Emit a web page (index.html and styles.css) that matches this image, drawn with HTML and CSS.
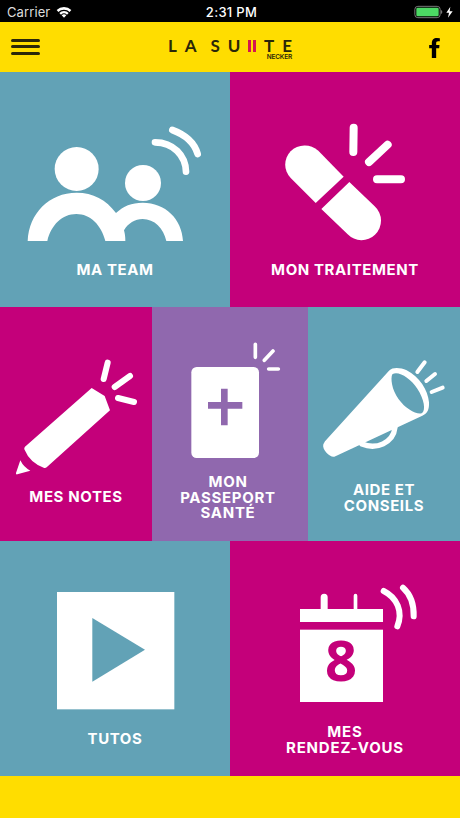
FILE: index.html
```
<!DOCTYPE html>
<html lang="fr">
<head>
    <meta charset="UTF-8">
    <meta name="viewport" content="width=device-width, initial-scale=1.0">
    <title>La Suite Necker</title>
    <link rel="stylesheet" href="styles.css">
</head>
<body>

<!-- Barre de statut -->
<div class="status-bar">
    <div class="status-side">
        <span class="carrier">Carrier</span>
        <svg class="wifi" viewBox="0 0 48 36">
            <path d="M2 12a32 32 0 0 1 44 0l-5 6a24 24 0 0 0-34 0z"/>
            <path d="M10 21a20 20 0 0 1 28 0l-5 5a13 13 0 0 0-18 0z"/>
            <path d="M17 28a10 10 0 0 1 14 0l-7 7z"/>
        </svg>
    </div>
    <span class="time">2:31 PM</span>
    <div class="status-side right">
        <svg class="battery" viewBox="0 0 120 42">
            <rect class="battery-case" x="2.5" y="4" width="76" height="34" rx="9"/>
            <rect class="battery-level" x="7" y="8" width="67" height="26" rx="4"/>
            <path class="battery-tip" d="M81 15q4 2 4 6t-4 6z"/>
            <path class="bolt" d="M109 5L97 23h8l-3 15 14-19h-9z"/>
        </svg>
    </div>
</div>

<!-- En-tête -->
<header class="header">
    <button class="menu" aria-label="Menu">
        <span></span>
        <span></span>
        <span></span>
    </button>
    <div class="logo">
        <div class="logo-name">
            <span>L</span><span>A</span><span class="word">S</span><span>U</span>
            <i class="bars"></i>
            <span>T</span><span>E</span>
        </div>
        <div class="logo-sub">NECKER</div>
    </div>
    <svg class="facebook" viewBox="0 0 32 60">
        <path d="M8 60V31H0V21h8v-5C8 5 14 0 23 0q5 0 9 1v9h-5c-5 0-6 2-6 6v5h10l-1 10h-9v29z"/>
    </svg>
</header>

<!-- Menu principal -->
<main class="tiles">
    <div class="row">
        <a class="tile blue team">
            <svg class="icon" viewBox="0 0 690 456">
                <circle cx="230" cy="177" r="66"/>
                <circle cx="429" cy="219" r="54"/>
                <path d="M83 393C87 310 147 248 230 248c49 0 89 21 118 61 22-21 47-31 80-31 68 0 118 49 121 115h-50c-8-38-36-66-71-66-23 0-44 13-56 34 3 11 4 20 4 32h-60c-12-48-45-81-87-81s-76 33-87 81z"/>
                <path class="line w20" d="M465 97c55 0 92 40 93 88M517 60c38 14 66 37 76 72"/>
            </svg>
            <span class="label">MA TEAM</span>
        </a>
        <a class="tile pink treatment">
            <svg class="icon" viewBox="0 0 690 456">
                <path d="M341 200l-84 79-75-75a57 57 0 0 1 0-80 60 60 0 0 1 83-2z"/>
                <path d="M358 216l76 73a58 58 0 0 1 1 85 58 58 0 0 1-82-1l-79-76z"/>
                <path class="line w24" d="M371 53L370 126M473 104L417 156M441 208H513"/>
            </svg>
            <span class="label">MON TRAITEMENT</span>
        </a>
    </div>

    <div class="row row-three">
        <a class="tile pink notes">
            <svg class="icon" viewBox="0 0 456 445">
                <path d="M275 144l39 24 16 43-190 171q-4 3-9 1-41-14-58-55-1-4 2-8z"/>
                <path d="M61 361q10 21 30 31l-39 11q-5 1-4-4z"/>
                <path class="line w18" d="M323 68L311 117M390 108L344 141M354 174L402 186"/>
            </svg>
            <span class="label">MES NOTES</span>
        </a>
        <a class="tile purple passport">
            <svg class="icon" viewBox="6 0 468 432">
                <rect x="124" y="111" width="203" height="273" rx="16"/>
                <path class="cut" d="M213 176h20v40h44v20h-44v50h-20v-50h-39v-20h39z"/>
                <path class="line w11" d="M316 43V82M343 91L369 63M356 117H385"/>
            </svg>
            <span class="label">MON<br>PASSEPORT<br>SANTÉ</span>
        </a>
        <a class="tile blue advice">
            <svg class="icon" viewBox="9 0 456 426">
                <path d="M60 304L252 92c12-11 34-9 53-1 38 19 64 60 67 96 1 23-5 34-20 40L88 350c-11 4-38-20-33-37z"/>
                <path class="cut" d="M262 103c-6 12-2 46 19 75 21 29 52 46 69 42 14-8 7-44-13-74-21-32-58-55-75-43z"/>
                <path class="line w16" d="M171 312c42 18 94-3 99-50"/>
                <path class="line w12" d="M359 67L337 96M390 102L364 123M413 143L380 156"/>
            </svg>
            <span class="label">AIDE ET<br>CONSEILS</span>
        </a>
    </div>

    <div class="row">
        <a class="tile blue tutos">
            <svg class="icon" viewBox="0 0 690 483">
                <rect x="171" y="66" width="352" height="352"/>
                <path class="cut" d="M277 144l158 95-158 96z"/>
            </svg>
            <span class="label">TUTOS</span>
        </a>
        <a class="tile pink meetings">
            <svg class="icon" viewBox="0 0 690 462">
                <path d="M210 117h62V82a10.500 10.500 0 0 1 21 0v35h78V77a5.500 5.500 0 0 1 11 0v40h77v39H210z"/>
                <rect x="210" y="179" width="249" height="217"/>
                <text class="day" x="333" y="333">8</text>
                <path class="line w18" d="M461 63c40 20 59 62 41 106M519 53c27 24 33 55 32 86"/>
            </svg>
            <span class="label">MES<br>RENDEZ-VOUS</span>
        </a>
    </div>
</main>

</body>
</html>
```

FILE: styles.css
```
* {
    box-sizing: border-box;
}

body {
    margin: 0;
    height: 818px;
    font-family: Inter, sans-serif;
    background-color: #ffdd00;
    overflow: hidden;
}

/* Barre de statut */
.status-bar {
    display: flex;
    align-items: center;
    justify-content: space-between;
    height: 22.4px;
    padding: 2px 6px 0 7px;
    background-color: #000;
    color: #fff;
    font-size: 13px;
    line-height: 20px;
}

.status-side {
    display: flex;
    align-items: center;
    flex: 1;
}

.right {
    justify-content: flex-end;
}

.carrier {
    color: #ddd;
    letter-spacing: 0.1px;
}

.wifi {
    width: 16px;
    height: 12px;
    margin-left: 6px;
    fill: #fff;
}

.time {
    font-weight: 500;
    font-size: 13px;
    letter-spacing: 0.3px;
    margin-left: 2px;
}

.battery {
    width: 40px;
    height: 14px;
}

.battery-case {
    fill: none;
    stroke: #777;
    stroke-width: 3;
}

.battery-level {
    fill: #4cd964;
}

.battery-tip {
    fill: #777;
}

.bolt {
    fill: #fff;
}

/* En-tête */
.header {
    display: grid;
    grid-template-columns: 157px 1fr 11px;
    align-items: start;
    height: 49.8px;
    padding: 15.500px 20px 0 11px;
}

.menu {
    display: flex;
    flex-direction: column;
    gap: 3.600px;
    width: 28.500px;
    margin-top: 1px;
    padding: 0;
    border: 0;
    background: none;
}

.menu span {
    height: 3px;
    border-radius: 2px;
    background-color: #2b2708;
}

.logo {
    width: 124px;
    margin-top: 1px;
}

.logo-name {
    display: flex;
    justify-content: space-between;
    align-items: center;
    height: 14px;
    font-family: Lato, sans-serif;
    font-size: 17px;
    font-weight: bold;
    line-height: 14px;
    color: #2b2708;
}

.word {
    margin-left: 6px;
}

.bars {
    width: 8px;
    height: 12px;
    border: solid #d5164f;
    border-width: 0 3px;
}

.logo-sub {
    font-size: 6.500px;
    font-weight: 600;
    line-height: 8px;
    text-align: right;
    letter-spacing: -0.2px;
    color: #2b2708;
}

.facebook {
    width: 11px;
    height: 20px;
}

/* Tuiles */
.row {
    display: grid;
    grid-template-columns: 230px 230px;
    height: 234.500px;
}

.row-three {
    grid-template-columns: 152px 156px 152px;
}

.tile {
    display: flex;
    flex-direction: column;
    align-items: center;
    color: #fff;
}

.blue {
    background-color: #62a2b6;
}

.pink {
    background-color: #c4007a;
}

.purple {
    background-color: #9068ae;
}

.icon {
    display: block;
    flex: none;
    width: 100%;
    fill: #fff;
}

.line {
    fill: none;
    stroke: #fff;
    stroke-linecap: round;
}

.w11 {
    stroke-width: 11;
}

.w12 {
    stroke-width: 12;
}

.w16 {
    stroke-width: 16;
}

.w18 {
    stroke-width: 18;
}

.w20 {
    stroke-width: 20;
}

.w24 {
    stroke-width: 24;
}

.blue .cut {
    fill: #62a2b6;
}

.purple .cut {
    fill: #9068ae;
}

.label {
    margin-top: 0.500px;
    font-size: 15px;
    font-weight: 700;
    line-height: 15.500px;
    letter-spacing: 0.600px;
    text-align: center;
    white-space: nowrap;
}

.team, .treatment {
    padding-top: 37.800px;
}

.notes, .advice {
    padding-top: 33.300px;
}

.passport {
    padding-top: 23.300px;
}

.passport .label {
    margin-right: 4px;
    letter-spacing: 0.700px;
}

.tutos, .meetings {
    padding-top: 28.800px;
}

.meetings .label {
    letter-spacing: 0.800px;
}

.day {
    font-family: "Open Sans", sans-serif;
    font-size: 168px;
    font-weight: 700;
    text-anchor: middle;
    fill: #c4007a;
}
```
